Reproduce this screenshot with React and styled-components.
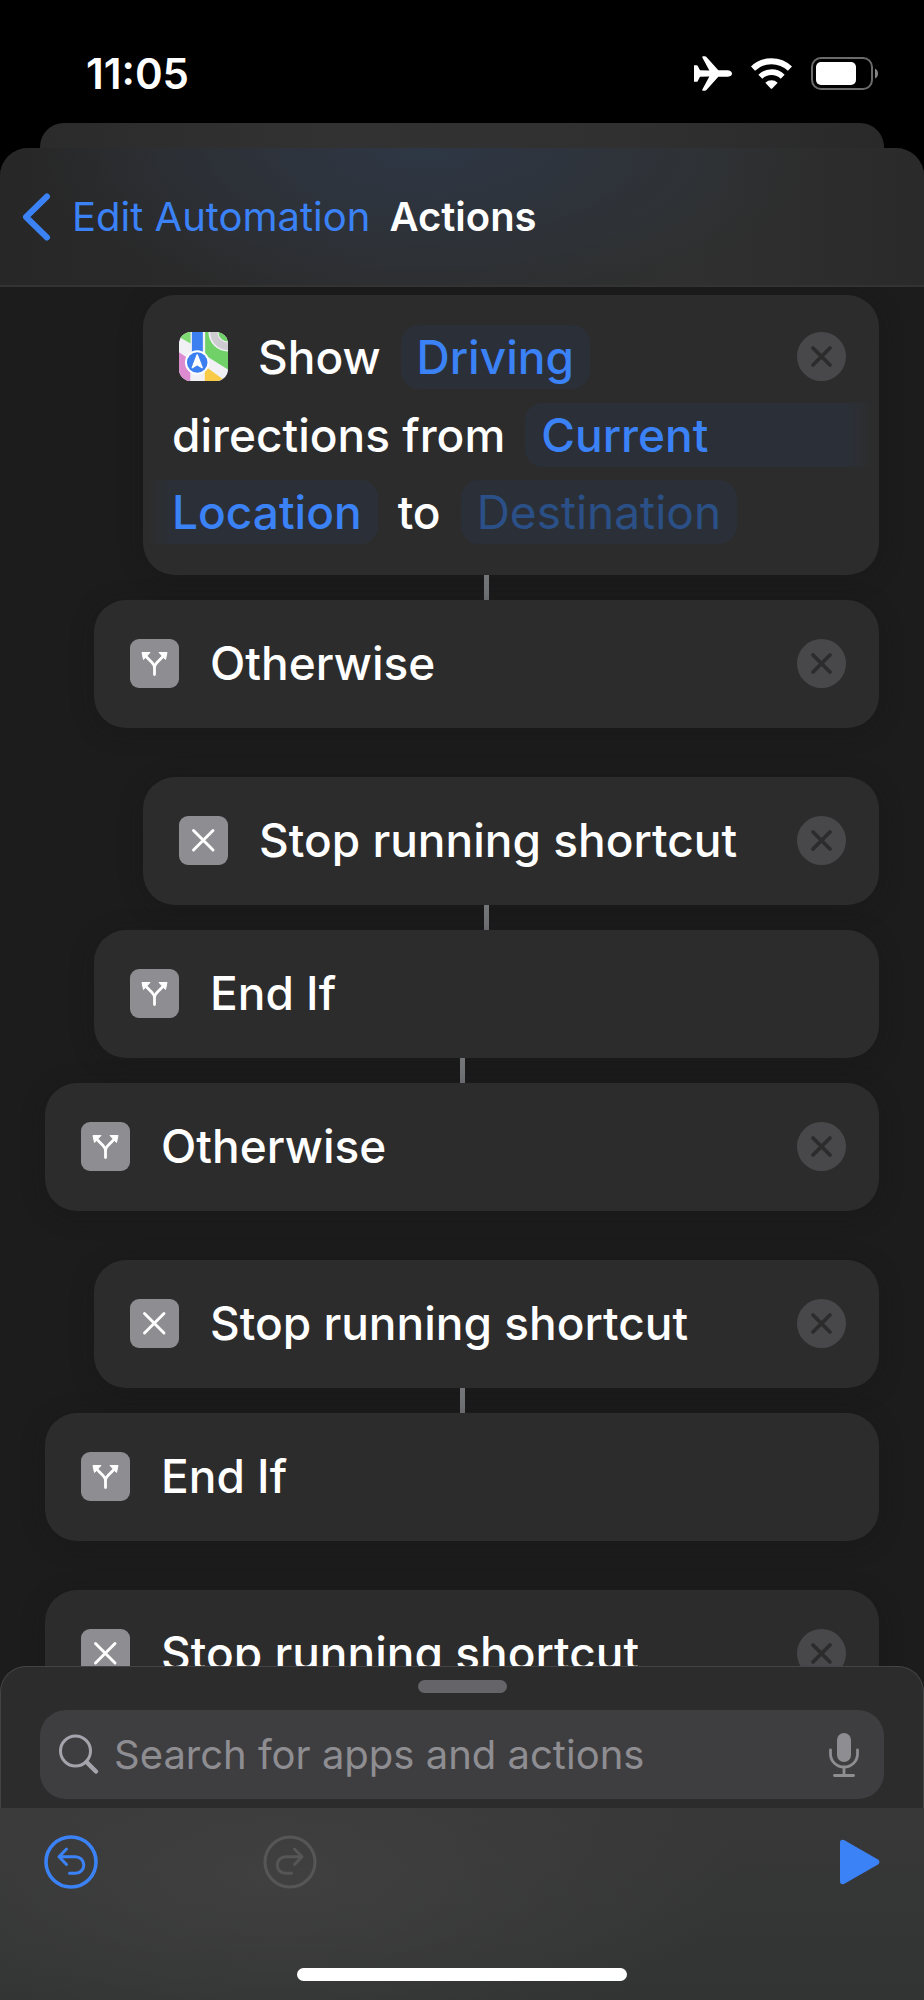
import React, { useState } from 'react';
import styled, { createGlobalStyle } from 'styled-components';

const GlobalStyle = createGlobalStyle`
  * {
    box-sizing: border-box;
  }

  body {
    margin: 0;
    background-color: #000;
    color: #fff;
    font-family: Inter, 'Liberation Sans', sans-serif;
  }

  button {
    padding: 0;
    border: 0;
    background: none;
    color: inherit;
    font: inherit;
    cursor: pointer;
  }

  svg {
    display: block;
  }
`;

const Screen = styled.div`
  display: flex;
  flex-direction: column;
  height: 100vh;
  overflow: hidden;
`;

const StatusBar = styled.div`
  display: flex;
  flex: none;
  align-items: center;
  justify-content: space-between;
  height: 123px;
  padding: 24px 45px 0 86px;
`;

const Time = styled.time`
  font-size: 42px;
  font-weight: 600;
  line-height: 48px;
`;

const StatusIcons = styled.div`
  display: flex;
  align-items: center;
  gap: 19px;
`;

const BackSheet = styled.div`
  flex: none;
  height: 25px;
  margin: 0 40px;
  border-radius: 24px 24px 0 0;
  background: linear-gradient(90deg, #2b2b2b, #323232 35%, #303030 70%, #292929);
`;

const Sheet = styled.div`
  display: flex;
  flex: 1;
  flex-direction: column;
  min-height: 0;
  overflow: hidden;
  border-radius: 28px 28px 0 0;
  background-color: #1c1c1c;
`;

const Header = styled.header`
  display: flex;
  flex: none;
  align-items: center;
  gap: 19px;
  height: 139px;
  padding: 0 22px;
  border-bottom: 2px solid #333334;
  background: radial-gradient(ellipse 42% 120% at 46% 0, #2e3745, rgba(46, 53, 64, 0.6) 55%, transparent),
    linear-gradient(90deg, #272727, #2d2d2d 40%, #2f302f 75%, #2a2a2a);
`;

const BackLink = styled.a`
  display: flex;
  align-items: center;
  gap: 20px;
  color: #3b82f7;
  font-size: 40px;
  line-height: 48px;
  text-decoration: none;
`;

const Title = styled.h1`
  margin: 0;
  font-size: 40px;
  font-weight: 600;
  line-height: 48px;
`;

const List = styled.main`
  flex: 1;
  min-height: 0;
  margin-bottom: -24px;
  padding: 8px 45px 24px;
  overflow-y: auto;
  scrollbar-width: none;
`;

const Step = styled.div`
  margin-left: ${(p) => p.$level * 49}px;
`;

const Connector = styled.div`
  width: 5px;
  height: 25px;
  margin: 0 auto;
  background-color: #747579;
`;

const Gap = styled.div`
  height: 49px;
`;

const Card = styled.section`
  display: flex;
  align-items: center;
  height: 128px;
  padding: 0 33px 2px 36px;
  border-radius: 32px;
  background-color: #2c2c2c;
  box-shadow: 0 4px 24px rgba(20, 20, 24, 0.3);
`;

const Label = styled.h2`
  flex: 1;
  margin: 0 0 0 31px;
  font-size: 46px;
  font-weight: 500;
  line-height: 64px;
  white-space: nowrap;
`;

const RouteCard = styled(Card)`
  flex-direction: column;
  align-items: stretch;
  height: auto;
  padding: 24px 7px 25px 29px;
`;

const Line = styled.div`
  display: flex;
  align-items: center;
  gap: 20px;
  height: 77px;
  font-size: 46px;
  font-weight: 500;
  line-height: 64px;
  white-space: nowrap;
`;

const Verb = styled.span`
  margin-left: 10px;
`;

const FirstLine = styled(Line)`
  padding: 0 26px 2px 7px;

  & > :last-child {
    margin-left: auto;
  }
`;

const Token = styled.button`
  height: 64px;
  padding: 0 16px;
  border-radius: 18px;
  background-color: #2b3038;
  color: ${(p) => (p.$empty ? '#2a5087' : '#3b82f7')};
  font-weight: ${(p) => (p.$empty ? 400 : 500)};
  text-align: left;
`;

const TokenStart = styled(Token)`
  flex: 1;
  border-radius: 18px 0 0 18px;
  background: linear-gradient(to left, transparent, #2b3038 24px);
`;

const TokenEnd = styled(Token)`
  margin-left: -24px;
  padding-left: 24px;
  border-radius: 0 18px 18px 0;
  background: linear-gradient(to right, transparent, #2b3038 24px);
`;

const Tile = styled.span`
  flex: none;
  width: 49px;
  height: 49px;
  border-radius: ${(p) => (p.$app ? 12 : 9)}px;
  background-color: #8e8d92;
  overflow: hidden;
`;

const ClearButton = styled.button`
  flex: none;
  width: 49px;
  height: 49px;
  border-radius: 50%;
  background-color: #48484a;
`;

const Dock = styled.section`
  position: relative;
  display: flex;
  flex: none;
  flex-direction: column;
  align-items: center;
  height: 142px;
  padding: 13px 39px 0;
  border: 1px solid #444446;
  border-bottom: 0;
  border-radius: 26px 26px 0 0;
  background-color: #2c2c2c;
`;

const Handle = styled.div`
  flex: none;
  width: 89px;
  height: 13px;
  border-radius: 7px;
  background-color: #656469;
`;

const SearchField = styled.label`
  display: flex;
  flex: none;
  align-items: center;
  width: 100%;
  height: 89px;
  margin-top: 17px;
  padding: 0 25px 0 18px;
  border-radius: 26px;
  background-color: #3e3e40;
`;

const SearchInput = styled.input`
  flex: 1;
  min-width: 0;
  margin-left: 14px;
  padding: 0;
  border: 0;
  outline: 0;
  background: none;
  color: #fff;
  font-family: inherit;
  font-size: 40px;
  line-height: 48px;

  &::placeholder {
    color: #8e8d92;
    opacity: 1;
  }
`;

const Toolbar = styled.footer`
  position: relative;
  display: flex;
  flex: none;
  flex-direction: column;
  justify-content: space-between;
  height: 192px;
  padding: 27px 44px 19px;
  background: radial-gradient(ellipse 50% 90% at 30% 35%, #404041, transparent),
    linear-gradient(#383838, #323333);
`;

const Tools = styled.div`
  display: flex;
  align-items: center;
  justify-content: space-between;
`;

const History = styled.div`
  display: flex;
  gap: 165px;
`;

const ToolButton = styled.button`
  color: #3b82f7;

  &:disabled {
    color: #565657;
    cursor: default;
  }
`;

const HomeIndicator = styled.div`
  width: 330px;
  height: 13px;
  margin: 0 auto;
  border-radius: 7px;
  background-color: #fff;
`;

const Airplane = () => (
  <svg width="38" height="35" viewBox="0 0 114 104" fill="#fff" aria-hidden="true">
    <path d="M0 27H7Q10 27 11 29L18 42L46 43L25 4Q23 0 28 0H32Q36 0 38 3L73 42H102Q114 44 114 52Q114 60 102 62H73L38 101Q36 104 32 104H28Q23 104 25 100L46 61L18 62L11 75Q10 77 7 77H0Z" />
  </svg>
);

const Wifi = () => (
  <svg width="41" height="31" viewBox="0 0 123 93" fill="none" aria-hidden="true">
    <path d="M6 32A80 80 0 0 1 117 32" stroke="#fff" strokeWidth="18" />
    <path d="M28 56A48 48 0 0 1 95 56" stroke="#fff" strokeWidth="17" />
    <path d="M43 74A27 27 0 0 1 80 74L63 92Q61.500 93 60 92Z" fill="#fff" />
  </svg>
);

const Battery = () => (
  <svg width="68" height="33" viewBox="0 0 68 33" aria-hidden="true">
    <rect x="1" y="1" width="60" height="31" rx="9" fill="none" stroke="#6b6b6b" strokeWidth="2" />
    <rect x="5" y="5" width="40" height="23" rx="5" fill="#fff" />
    <path d="M64 11.500Q67 13 67 16.500Q67 20 64 21.500Z" fill="#858585" />
  </svg>
);

const Chevron = () => (
  <svg width="30" height="48" viewBox="0 0 30 48" fill="none" aria-hidden="true">
    <path d="M25 3.500L4 24L25 44.500" stroke="currentColor" strokeWidth="6" strokeLinecap="round" strokeLinejoin="round" />
  </svg>
);

const ForkIcon = () => (
  <svg width="49" height="49" viewBox="0 0 49 49" aria-hidden="true">
    <path
      d="M24.500 35.500V29Q24.500 26 22 23.500L15 16.500M24.500 29Q24.500 26 27 23.500L34 16.500"
      fill="none"
      stroke="#fff"
      strokeWidth="2.800"
      strokeLinecap="round"
    />
    <path
      d="M12 13.500L20 13.500L13.500 20.500ZM37 13.500L29 13.500L35.500 20.500Z"
      fill="#fff"
      stroke="#fff"
      strokeLinejoin="round"
    />
  </svg>
);

const StopIcon = () => (
  <svg width="49" height="49" viewBox="0 0 49 49" aria-hidden="true">
    <path d="M14.500 14.500L34 34M34 14.500L14.500 34" stroke="#fff" strokeWidth="2.900" strokeLinecap="round" />
  </svg>
);

const MapsIcon = () => (
  <svg width="49" height="49" viewBox="0 0 148 148" aria-hidden="true">
    <rect width="148" height="148" fill="#f1f0f5" />
    <path d="M0 0H35V35L0 15Z" fill="#80da74" />
    <path d="M79 0H148V113L79 70Z" fill="#6fd168" />
    <circle cx="148" cy="0" r="44" fill="none" stroke="#f1f0f5" strokeWidth="30" />
    <circle cx="148" cy="0" r="43" fill="none" stroke="#cdccd0" strokeWidth="22" />
    <path d="M0 61L34 84V148H0Z" fill="#dd8bd0" />
    <path d="M78 103L132 142L122 148H78Z" fill="#f8ca45" />
    <rect x="39" width="33" height="70" fill="#3b7ff0" />
    <circle cx="55" cy="92" r="37" fill="#fff" />
    <circle cx="55" cy="92" r="31" fill="#3b7ff0" />
    <path d="M55 69L70 108L55 99L40 108Z" fill="#fff" stroke="#fff" strokeWidth="4" strokeLinejoin="round" />
  </svg>
);

const SearchIcon = () => (
  <svg width="42" height="42" viewBox="0 0 42 42" fill="none" stroke="#a5a4ac" aria-hidden="true">
    <circle cx="17.500" cy="17" r="15" strokeWidth="3" />
    <path d="M28.500 28L38 37.500" strokeWidth="4.500" strokeLinecap="round" />
  </svg>
);

const MicIcon = () => (
  <svg width="30" height="44" viewBox="0 0 30 44" fill="none" stroke="#8e8d92" aria-hidden="true">
    <rect x="8" y="0" width="14" height="29" rx="7" fill="#8e8d92" stroke="none" />
    <path d="M1.500 17V21A13.500 13 0 0 0 28.500 21V17M15 34.500V42M5.500 42.500H24.500" strokeWidth="2.800" strokeLinecap="round" />
  </svg>
);

const UndoIcon = () => (
  <svg width="54" height="54" viewBox="0 0 54 54" fill="none" stroke="currentColor" aria-hidden="true">
    <circle cx="27" cy="27" r="25" strokeWidth="3.600" />
    <path
      d="M22.500 14L15 21.700L22.500 29.500M15 21.700H31.500A8.300 8.300 0 0 1 31.500 38.300H25.500"
      strokeWidth="3"
      strokeLinecap="round"
      strokeLinejoin="round"
    />
  </svg>
);

const RedoIcon = () => (
  <svg width="54" height="54" viewBox="0 0 54 54" fill="none" stroke="currentColor" aria-hidden="true">
    <circle cx="27" cy="27" r="25" strokeWidth="3.100" />
    <path
      d="M31.500 14L39 21.700L31.500 29.500M39 21.700H22.500A8.300 8.300 0 0 0 22.500 38.300H28.500"
      strokeWidth="3"
      strokeLinecap="round"
      strokeLinejoin="round"
    />
  </svg>
);

const PlayIcon = () => (
  <svg width="40" height="46" viewBox="0 0 40 46" fill="currentColor" aria-hidden="true">
    <path d="M0 4Q0 0 4 1L38 20.500Q41 23 38 25.500L4 45Q0 46 0 42Z" />
  </svg>
);

const Clear = () => (
  <ClearButton type="button" aria-label="Remove action">
    <svg width="49" height="49" viewBox="0 0 49 49" aria-hidden="true">
      <path d="M16 16L33 33M33 16L16 33" stroke="#2c2c2c" strokeWidth="3.800" strokeLinecap="round" />
    </svg>
  </ClearButton>
);

const steps = [
  { text: 'Otherwise', icon: 'fork', level: 1, before: 'line', clear: true },
  { text: 'Stop running shortcut', icon: 'stop', level: 2, before: 'gap', clear: true },
  { text: 'End If', icon: 'fork', level: 1, before: 'line' },
  { text: 'Otherwise', icon: 'fork', level: 0, before: 'line', clear: true },
  { text: 'Stop running shortcut', icon: 'stop', level: 1, before: 'gap', clear: true },
  { text: 'End If', icon: 'fork', level: 0, before: 'line' },
  { text: 'Stop running shortcut', icon: 'stop', level: 0, before: 'gap', clear: true },
];

const App = () => {
  const [query, setQuery] = useState('');

  return (
    <Screen>
      <GlobalStyle />
      <StatusBar>
        <Time>11:05</Time>
        <StatusIcons>
          <Airplane />
          <Wifi />
          <Battery />
        </StatusIcons>
      </StatusBar>
      <BackSheet />
      <Sheet>
        <Header>
          <BackLink href="#automation">
            <Chevron />
            Edit Automation
          </BackLink>
          <Title>Actions</Title>
        </Header>
        <List>
          <Step $level={2}>
            <RouteCard>
              <FirstLine>
                <Tile $app>
                  <MapsIcon />
                </Tile>
                <Verb>Show</Verb>
                <Token type="button">Driving</Token>
                <Clear />
              </FirstLine>
              <Line>
                <span>directions from</span>
                <TokenStart type="button">Current</TokenStart>
              </Line>
              <Line>
                <TokenEnd type="button">Location</TokenEnd>
                <span>to</span>
                <Token type="button" $empty>
                  Destination
                </Token>
              </Line>
            </RouteCard>
          </Step>
          {steps.map((step, i) => (
            <Step key={i} $level={step.level}>
              {step.before === 'line' ? <Connector /> : <Gap />}
              <Card>
                <Tile>{step.icon === 'fork' ? <ForkIcon /> : <StopIcon />}</Tile>
                <Label>{step.text}</Label>
                {step.clear && <Clear />}
              </Card>
            </Step>
          ))}
        </List>
        <Dock>
          <Handle />
          <SearchField>
            <SearchIcon />
            <SearchInput
              type="text"
              aria-label="Search for apps and actions"
              placeholder="Search for apps and actions"
              value={query}
              onChange={(e) => setQuery(e.target.value)}
            />
            <MicIcon />
          </SearchField>
        </Dock>
        <Toolbar>
          <Tools>
            <History>
              <ToolButton type="button" aria-label="Undo">
                <UndoIcon />
              </ToolButton>
              <ToolButton type="button" aria-label="Redo" disabled>
                <RedoIcon />
              </ToolButton>
            </History>
            <ToolButton type="button" aria-label="Run">
              <PlayIcon />
            </ToolButton>
          </Tools>
          <HomeIndicator />
        </Toolbar>
      </Sheet>
    </Screen>
  );
};

export default App;
